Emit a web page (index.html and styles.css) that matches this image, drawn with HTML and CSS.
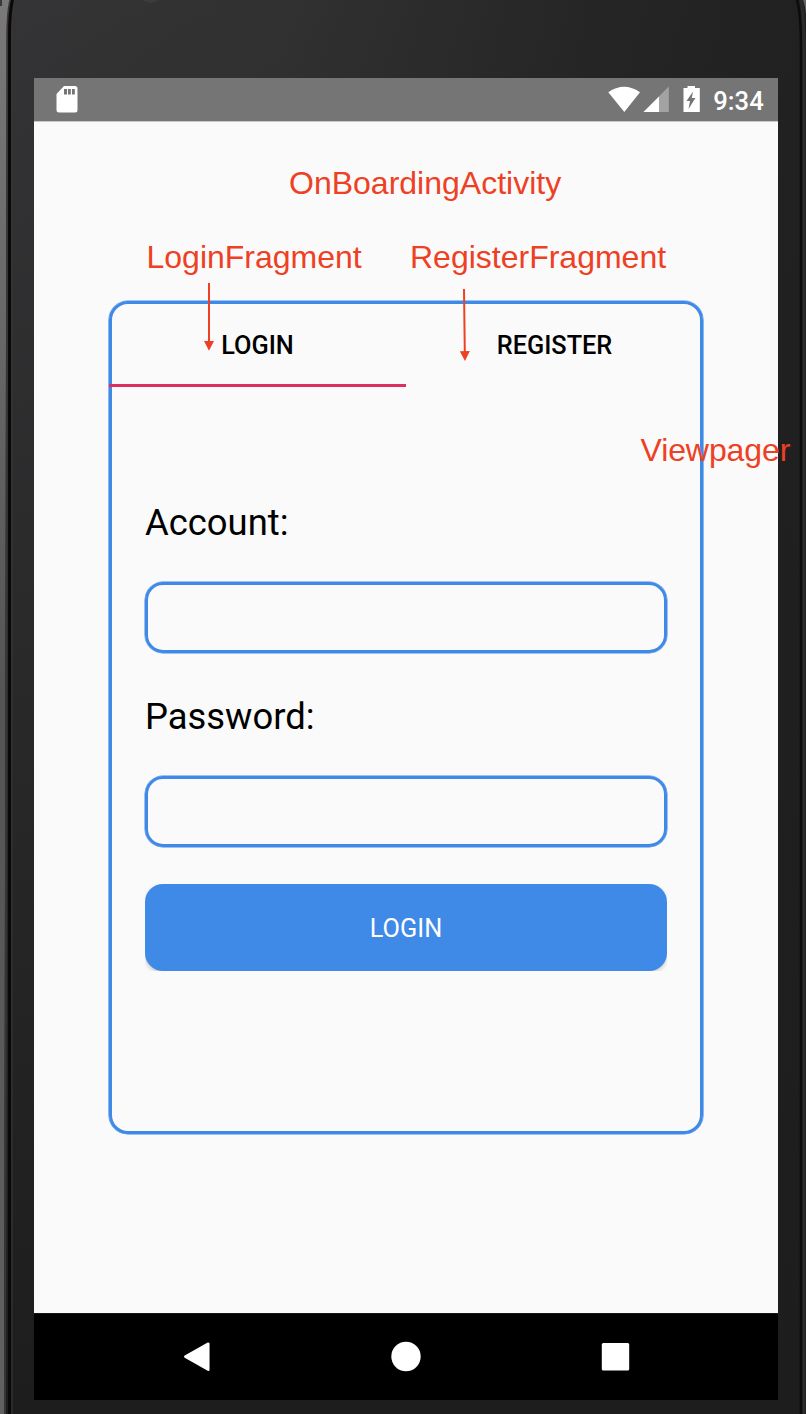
FILE: index.html
```html
<!DOCTYPE html>
<html lang="en">
<head>
<meta charset="utf-8">
<title>OnBoardingActivity</title>
<link rel="stylesheet" href="styles.css">
</head>
<body>
<div class="device">
  <svg class="shell" viewBox="0 0 806 1414" aria-hidden="true">
    <defs>
      <linearGradient id="face" x1="0" y1="0" x2="1" y2="0">
        <stop offset="0" stop-color="#343436"/><stop offset=".35" stop-color="#313131"/><stop offset=".75" stop-color="#252525"/><stop offset="1" stop-color="#212121"/>
      </linearGradient>
      <linearGradient id="fade" x1="0" y1="0" x2="0" y2="1">
        <stop offset="0" stop-color="#1d1d1d" stop-opacity="0"/><stop offset="1" stop-color="#1d1d1d"/>
      </linearGradient>
      <linearGradient id="metal" x1="0" y1="0" x2="0" y2="1">
        <stop offset="0" stop-color="#7b7879"/><stop offset=".5" stop-color="#555354"/><stop offset="1" stop-color="#626062"/>
      </linearGradient>
    </defs>
    <rect width="806" height="1414" fill="url(#face)"/>
    <rect width="806" height="1414" fill="url(#fade)"/>
    <path d="M0 0H11Q7 9 6.500 35L4 1414H0Z" fill="url(#metal)"/>
    <path d="M0 0H2V6H0Z" fill="#353b3d"/>
    <path d="M10.500 0Q7.500 10 7.500 35V100L5 1414" fill="none" stroke="#373637" stroke-width="2"/>
    <path d="M12.500 0Q9.500 12 9.500 38V1414" fill="none" stroke="#090909" stroke-width="3"/>
    <path d="M15 0Q12 12 12 38V1414" fill="none" stroke="#383838" stroke-width="1"/>
    <path d="M797 0Q801 14 801 50V1414" fill="none" stroke="#0c0c0c" stroke-width="2.500"/>
    <path d="M801 0Q804 12 804 50V1414" fill="none" stroke="#2b2b2b" stroke-width="3"/>
    <path d="M803 0H806V14Q805 5 803 0Z" fill="#666"/>
    <circle cx="150.500" cy="-9" r="12" fill="#3b3b3c"/>
  </svg>

  <main class="screen">
    <header class="status">
      <svg class="sd" viewBox="0 0 22 27"><path d="M8 0H19Q21.500 0 21.500 2.500V24Q21.500 26.500 19 26.500H3Q.5 26.500 .5 24V8Z" fill="#fff"/><path d="M8 3h3v5.500H8zM12 3h2.800v5.500h-2.800zM16 3H18.800v5.500h-2.800z" fill="#757575"/></svg>
      <svg class="signals" viewBox="0 0 94 28">
        <path d="M.3 6.300Q16 -4.800 32 6.300L16.300 26Z" fill="#fff"/>
        <path d="M60.800.5V26H35.500Z" fill="#a3a3a3"/><path d="M51 10.500V26H35.500Z" fill="#fff"/>
        <path d="M75.500 2H79.500V0H87V2H91.800V26H75.500Z" fill="#fff"/><path d="M85 5.500L78.500 15H82L80.500 23L87.500 12H83.800Z" fill="#757575"/>
      </svg>
      <span class="clock">9:34</span>
    </header>

    <section class="content">
      <div class="card">
        <nav class="tabs"><span class="tab active">LOGIN</span><span class="tab">REGISTER</span></nav>
        <form class="form">
          <label class="label" for="account">Account:</label>
          <input class="field" id="account" type="text">
          <label class="label" for="password">Password:</label>
          <input class="field" id="password" type="password">
          <div class="action"><button class="submit" type="button">LOGIN</button></div>
        </form>
      </div>
    </section>

    <footer class="softkeys">
      <svg viewBox="0 0 744 86">
        <path d="M151.300 42.700L174.300 29.700V55.700Z" fill="#fff" stroke="#fff" stroke-width="2.500" stroke-linejoin="round"/>
        <circle cx="372" cy="42.500" r="14.700" fill="#fff"/>
        <rect x="567.800" y="29" width="27.400" height="27.500" rx="1.500" fill="#fff"/>
      </svg>
    </footer>
  </main>

  <span class="note note-activity">OnBoardingActivity</span>
  <span class="note note-login">LoginFragment</span>
  <span class="note note-register">RegisterFragment</span>
  <span class="note note-pager">Viewpager</span>
  <svg class="arrows" viewBox="0 0 806 1414" aria-hidden="true">
    <path d="M209 283V343M464 289L464.800 352" stroke="#ee4023" stroke-width="2"/>
    <path d="M204 341H214L209 350.800ZM459.800 351.200L469.800 351L465 361Z" fill="#ee4023"/>
  </svg>
</div>
</body>
</html>
```
FILE: styles.css
```css
* { box-sizing: border-box; }
body { margin: 0; }
.device {
  position: relative;
  width: 806px;
  height: 1414px;
  padding: 78px 28px 14px 34px;
  overflow: hidden;
  font-family: Roboto, sans-serif;
}
.shell, .arrows { position: absolute; left: 0; top: 0; width: 806px; height: 1414px; }
.screen {
  position: relative;
  display: flex;
  flex-direction: column;
  height: 1322px;
  background: #fafafa;
}
.status {
  display: flex;
  align-items: center;
  height: 44px;
  padding: 0 14px 0 22px;
  background: #757575;
  border-bottom: 1px solid #c8c8c8;
  color: #fff;
}
.sd { width: 22px; height: 27px; }
.signals { width: 94px; height: 28px; margin: 0 11px 0 auto; }
.clock { width: 51px; text-align: center; font-size: 25.6px; font-weight: 500; line-height: 44px; padding-top: 2px; }
.content { flex: 1; padding: 179px 75px 0; }
.card {
  width: 594px;
  height: 833px;
  border: 3px solid #408ae7;
  border-radius: 19px;
  box-shadow: 0 0 0 .6px #408ae7;
}
.tabs { display: flex; height: 83px; margin: 0 -3px; }
.tab {
  flex: 1;
  padding-top: 26px;
  border-bottom: 3px solid transparent;
  font-size: 25.3px;
  font-weight: 500;
  line-height: 32px;
  text-align: center;
  color: #000;
}
.tab.active { border-bottom-color: #dc2f60; }
.form { display: flex; flex-direction: column; padding: 112px 33px 0; }
.label { height: 48px; font-size: 36.4px; line-height: 48px; color: #000; }
.field {
  width: 522px;
  height: 71px;
  margin: 35px 0 40px;
  padding: 0 18px;
  border: 3px solid #408ae7;
  border-radius: 18px;
  box-shadow: 0 0 0 .5px #408ae7;
  background: transparent;
  font: 32px Roboto, sans-serif;
  outline: none;
}
.action { width: 522px; height: 87px; margin-top: -3px; overflow: hidden; }
.submit {
  width: 522px;
  height: 87px;
  padding: 2px 0 0;
  border: 0;
  border-radius: 18px;
  background: #408ae7;
  box-shadow: 0 2px 4px #0003;
  color: #fff;
  font: 25.3px Roboto, sans-serif;
}
.softkeys { height: 87px; background: #000; border-top: 1px solid #161616; }
.softkeys svg { display: block; width: 744px; height: 86px; }
.note {
  position: absolute;
  font-family: "Liberation Sans", Arial, sans-serif;
  font-size: 32px;
  line-height: 36px;
  white-space: nowrap;
  color: #ee4023;
}
.note-activity { left: 289px; top: 165px; }
.note-login { left: 146.500px; top: 239px; }
.note-register { left: 410px; top: 239px; }
.note-pager { left: 640.500px; top: 432px; letter-spacing: -.1px; }
```
